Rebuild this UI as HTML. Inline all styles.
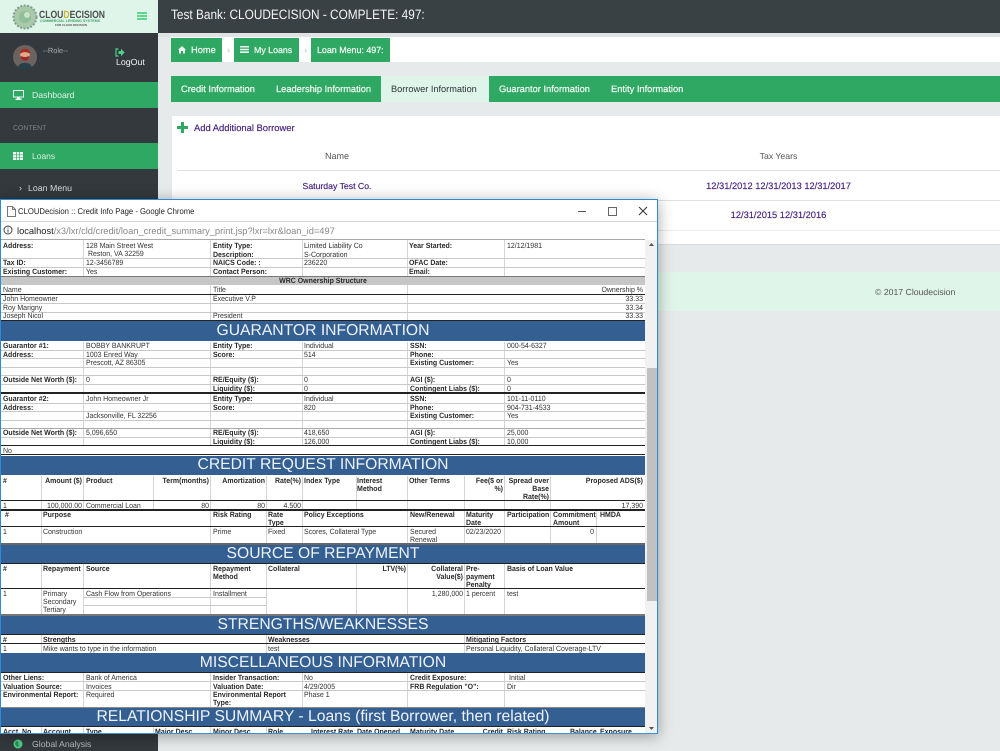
<!DOCTYPE html>
<html><head><meta charset="utf-8"><style>
html,body{margin:0;padding:0;width:1000px;height:751px;overflow:hidden;background:#e6eaea;font-family:"Liberation Sans",sans-serif;text-rendering:geometricPrecision}
div,span,a{position:absolute;white-space:nowrap}
.g{background:#2ea862}
.w{color:#eef7f1;font-size:9.3px;line-height:14px;-webkit-text-stroke:.25px #eef7f1}
.p{color:#43207f;font-size:9.3px;line-height:14px;-webkit-text-stroke:.15px #43207f}
#win{left:0;top:199px;width:658px;height:535px;background:#fff;box-shadow:0 2px 14px rgba(0,0,0,.35);border:1px solid #2b8bd6;border-bottom:1px solid #3a94d8;box-sizing:border-box;overflow:hidden}
#doc{left:-1px;top:-199px;width:1000px;height:751px}
#doc div{line-height:10px;height:10px;font-size:7.6px;color:#333}
#doc div.l{height:1px;background:#c9c9c9}
#doc div.k{height:1px;background:#222}
#doc div.v{width:1px;background:#d4d4d4}
#doc div.bl{background:#345f92;left:1px;width:644px}
#doc div.h{left:1px;width:644px;text-align:center;color:#eef3f8;font-size:15.7px;line-height:20px;height:20px}
#doc div.b{font-weight:bold;color:#2a2a2a}
#doc div.r{text-align:right}
#d>div:not(.l):not(.k):not(.v):not(.bl):not(.h){transform:scaleX(.92);transform-origin:0 50%}
#d>div.r:not(.l){transform-origin:100% 50%!important}
#d>div.c{transform-origin:50% 50%!important}
</style></head><body>
<!-- top -->
<div style="left:158px;top:0;width:842px;height:33px;background:#3a4144"></div>
<div style="left:158px;top:33px;width:842px;height:4px;background:#e0e3e3"></div>
<div style="left:171px;top:7px;color:#f4f4f4;font-size:13.6px;line-height:16px;transform-origin:0 50%;transform:scaleX(.87)">Test Bank: CLOUDECISION - COMPLETE: 497:</div>
<!-- sidebar -->
<div style="left:0;top:0;width:158px;height:751px;background:#33393d"></div>
<div style="left:0;top:0;width:158px;height:33px;background:#e0f5ea"></div>
<svg style="position:absolute;left:12px;top:4px" width="26" height="26"><circle cx="13" cy="13" r="11.5" fill="#a9c9a8"/><circle cx="13" cy="13" r="11.5" fill="none" stroke="#7f9f90" stroke-width="2" stroke-dasharray="2 1.5"/><circle cx="13" cy="13" r="6" fill="#8fc09a"/><circle cx="15" cy="11" r="3" fill="#c9e2c8"/></svg>
<div style="left:39px;top:9px;font-size:10.5px;font-weight:bold;color:#4a4f4f;line-height:12px;transform-origin:0 0;transform:scaleX(.82)">CLOU<span style="position:static;color:#c9b63a">D</span>ECISION</div>
<div style="left:40px;top:19px;font-size:3.6px;font-weight:bold;color:#3fa364;line-height:5px">COMMERCIAL LENDING SYSTEMS</div>
<div style="left:55px;top:23px;font-size:2.9px;font-weight:bold;color:#555;line-height:4px">FOR CLOUD DECISION</div>
<div style="left:137px;top:12px;width:10px;height:2px;background:#5ed68f"></div>
<div style="left:137px;top:15px;width:10px;height:2px;background:#5ed68f"></div>
<div style="left:137px;top:18px;width:10px;height:2px;background:#5ed68f"></div>
<svg style="position:absolute;left:13px;top:45px" width="24" height="24"><circle cx="12" cy="12" r="12" fill="#6b6360"/><path d="M5 23c1-4 3-5 7-5s6 1 7 5c-4 1.500-10 1.500-14 0z" fill="#26414a"/><circle cx="12" cy="10" r="5" fill="#e0a98a"/><path d="M7 9c-1-7 11-7 10 0-2-2.500-8-2.500-10 0z" fill="#a82c26"/><path d="M7.500 10.500c0 7 9 7 9 0-1.500 2-7.500 2-9 0z" fill="#9c2a24"/></svg>
<div style="left:43px;top:46px;color:#a9adb0;font-size:7.4px;line-height:10px">--Role--</div>
<svg style="position:absolute;left:115px;top:48px" width="10" height="9"><path d="M3.500 1H1v7h2.500" fill="none" stroke="#4fd08a" stroke-width="1.2"/><path d="M3.500 3H6V.8L9.600 4.500 6 8.200V6H3.500z" fill="#4fd08a"/></svg>
<div style="left:116px;top:56px;color:#f2f2f2;font-size:8.8px;line-height:12px">LogOut</div>
<div class="g" style="left:0;top:82px;width:158px;height:26px"></div>
<svg style="position:absolute;left:13px;top:90px" width="11" height="10"><path d="M0 0h11v7.500H7v1h1.500V10h-6V8.500H4v-1H0z" fill="#eef7f1"/><path d="M1 1h9v5.500H1z" fill="#2ea862"/></svg>
<div style="left:32px;top:88px;color:#e3f3e9;font-size:8.7px;line-height:14px">Dashboard</div>
<div style="left:13px;top:123px;color:#7f8487;font-size:6.9px;line-height:12px">CONTENT</div>
<div class="g" style="left:0;top:143px;width:158px;height:26px"></div>
<svg style="position:absolute;left:13px;top:152px" width="10" height="8"><path d="M0 0h10v8H0z" fill="#f2f7f3"/><path d="M3 0h.7v8H3zM6.300 0H7v8h-.7zM0 2.500h10v.6H0zM0 5.200h10v.6H0z" fill="#2ea862"/></svg>
<div style="left:32px;top:149px;color:#d9efe1;font-size:8.5px;line-height:14px">Loans</div>
<div style="left:19px;top:181px;color:#d8dadb;font-size:9px;line-height:14px">&#8250;</div>
<div style="left:28px;top:181px;color:#d8dadb;font-size:8.8px;line-height:14px">Loan Menu</div>
<!-- breadcrumb -->
<div style="left:171px;top:37px;width:829px;height:25px;background:#fff"></div>
<div class="g" style="left:171px;top:38px;width:51px;height:24px"></div>
<div class="g" style="left:234px;top:38px;width:65px;height:24px"></div>
<div class="g" style="left:311px;top:38px;width:79px;height:24px"></div>
<svg style="position:absolute;left:178px;top:46px" width="8" height="8"><path d="M4 0l4 3.800H7V7.500H5V5H3v2.500H1V3.800H0z" fill="#eef7f1"/></svg>
<div class="w" style="left:191px;top:43px;">Home</div>
<svg style="position:absolute;left:240px;top:46px" width="9" height="7"><path d="M0 0h9v1.500H0zM0 2.700h9v1.500H0zM0 5.400h9V7H0z" fill="#eef7f1"/></svg>
<div class="w" style="left:254px;top:43px;font-size:8.8px">My Loans</div>
<div class="w" style="left:317px;top:43px;font-size:8.9px">Loan Menu: 497:</div>
<div style="left:227px;top:44px;color:#8fcfa8;font-size:9px;line-height:12px">&#8250;</div>
<div style="left:304px;top:44px;color:#8fcfa8;font-size:9px;line-height:12px">&#8250;</div>
<!-- tabs -->
<div class="g" style="left:171px;top:76px;width:829px;height:26px"></div>
<div style="left:381px;top:76px;width:108px;height:26px;background:#e0f5ea"></div>
<div class="w" style="left:181px;top:82px">Credit Information</div>
<div class="w" style="left:276px;top:82px">Leadership Information</div>
<div style="left:391px;top:82px;color:#2b3236;font-size:9.2px;line-height:14px">Borrower Information</div>
<div class="w" style="left:499px;top:82px">Guarantor Information</div>
<div class="w" style="left:611px;top:82px">Entity Information</div>
<!-- card -->
<div style="left:172px;top:116px;width:828px;height:128px;background:#fff;border-bottom:1px solid #d8dcdc"></div>
<svg style="position:absolute;left:177px;top:122px" width="11" height="11"><path d="M4 0h3v4h4v3H7v4H4V7H0V4h4z" fill="#2ea862"/></svg>
<div class="p" style="left:194px;top:121px;font-size:9.4px">Add Additional Borrower</div>
<div style="left:237px;top:149px;width:200px;text-align:center;color:#555;font-size:9px;line-height:14px">Name</div>
<div style="left:678.500px;top:149px;width:200px;text-align:center;color:#555;font-size:8.7px;line-height:14px">Tax Years</div>
<div style="left:177px;top:170px;width:823px;height:1px;background:#dfe2e2"></div>
<div style="left:177px;top:200px;width:823px;height:1px;background:#dfe2e2"></div>
<div style="left:177px;top:230px;width:823px;height:1px;background:#eceeee"></div>
<div class="p" style="left:237px;top:179px;width:200px;text-align:center;font-size:8.7px">Saturday Test Co.</div>
<div class="p" style="left:628.500px;top:179px;width:300px;text-align:center;font-size:9.3px">12/31/2012 12/31/2013 12/31/2017</div>
<div class="p" style="left:628.500px;top:208px;width:300px;text-align:center;font-size:9.3px">12/31/2015 12/31/2016</div>
<!-- footer -->
<div style="left:158px;top:272px;width:842px;height:39px;background:#e0f5ea"></div>
<div style="left:875px;top:285px;color:#555;font-size:8.7px;line-height:14px">© 2017 Cloudecision</div>
<div style="left:0;top:734px;width:158px;height:17px;background:#33393d"></div>
<svg style="position:absolute;left:13px;top:739px" width="10" height="10"><circle cx="5" cy="5" r="4.500" fill="#4fd08a"/><path d="M3 2l3 1-1 2 2 2-3 1-2-3z" fill="#2c8f5f"/></svg>
<div style="left:32px;top:737px;color:#b9bdbf;font-size:8.7px;line-height:14px">Global Analysis</div>
<!-- window -->
<div id="win"><div id="doc">
<div style="left:1px;top:200px;width:657px;height:21px;background:#fff"></div>
<svg style="position:absolute;left:7px;top:205px" width="9" height="11"><path d="M.5.500h5l3 3v7H.500z M5.500.500v3h3" fill="#fff" stroke="#777"/></svg>
<div style="left:18px;top:205px;font-size:8.4px;color:#222;transform-origin:0 50%;transform:scaleX(.92)">CLOUDecision :: Credit Info Page - Google Chrome</div>
<div class="k" style="left:578px;top:210px;width:8px;background:#555"></div>
<div style="left:608px;top:206px;width:7px;height:7px;border:1px solid #666"></div>
<svg style="position:absolute;left:638px;top:205px" width="10" height="10"><path d="M1 1l8 8M9 1l-8 8" stroke="#333" stroke-width="1"/></svg>
<div class="l" style="left:1px;top:220px;width:657px;background:#d6d6d6"></div>
<svg style="position:absolute;left:3px;top:224px" width="10" height="10"><circle cx="5" cy="5" r="4" fill="none" stroke="#444"/><path d="M5 2.500v1M5 4.500V7.500" stroke="#444"/></svg>
<div style="left:17px;top:225px;font-size:9.3px;color:#888"><span style="position:static;color:#222">localhost</span>/x3/lxr/cld/credit/loan_credit_summary_print.jsp?lxr=lxr&amp;loan_id=497</div>
<div style="left:1px;top:238px;width:644px;height:496px;background:#fff;border-top:1px solid #a8a8a8"></div>
<div style="left:645px;top:239px;width:13px;height:495px;background:#f1f1f1"></div>
<div style="left:647px;top:367px;width:10px;height:233px;background:#c1c1c1"></div>
<svg style="position:absolute;left:648px;top:241px" width="7" height="6"><path d="M3.500 1L6 4H1z" fill="#555"/></svg>
<svg style="position:absolute;left:648px;top:724px" width="7" height="6"><path d="M3.500 5L1 2h5z" fill="#555"/></svg>
<div id="d" style="left:0;top:0;width:1000px;height:751px">
<!-- vertical lines -->
<div class="v" style="left:83px;top:239px;height:36px"></div><div class="v" style="left:210px;top:239px;height:36px"></div><div class="v" style="left:302px;top:239px;height:36px"></div><div class="v" style="left:407px;top:239px;height:36px"></div><div class="v" style="left:504px;top:239px;height:36px"></div>
<div class="v" style="left:210px;top:284px;height:35px"></div><div class="v" style="left:407px;top:284px;height:35px"></div>
<div class="v" style="left:83px;top:341px;height:103px"></div><div class="v" style="left:210px;top:341px;height:103px"></div><div class="v" style="left:302px;top:341px;height:103px"></div><div class="v" style="left:407px;top:341px;height:103px"></div><div class="v" style="left:504px;top:341px;height:103px"></div>
<div class="v" style="left:41px;top:475px;height:33px"></div><div class="v" style="left:83px;top:475px;height:33px"></div><div class="v" style="left:153px;top:475px;height:33px"></div><div class="v" style="left:210px;top:475px;height:33px"></div><div class="v" style="left:266px;top:475px;height:33px"></div><div class="v" style="left:302px;top:475px;height:33px"></div><div class="v" style="left:356px;top:475px;height:33px"></div><div class="v" style="left:407px;top:475px;height:33px"></div><div class="v" style="left:464px;top:475px;height:33px"></div><div class="v" style="left:504px;top:475px;height:33px"></div><div class="v" style="left:550px;top:475px;height:33px"></div>
<div class="v" style="left:41px;top:509px;height:34px"></div><div class="v" style="left:210px;top:509px;height:34px"></div><div class="v" style="left:266px;top:509px;height:34px"></div><div class="v" style="left:302px;top:509px;height:34px"></div><div class="v" style="left:407px;top:509px;height:34px"></div><div class="v" style="left:464px;top:509px;height:34px"></div><div class="v" style="left:504px;top:509px;height:34px"></div><div class="v" style="left:550px;top:509px;height:34px"></div><div class="v" style="left:596px;top:509px;height:34px"></div>
<div class="v" style="left:41px;top:563px;height:51px"></div><div class="v" style="left:83px;top:563px;height:51px"></div><div class="v" style="left:210px;top:563px;height:51px"></div><div class="v" style="left:266px;top:563px;height:51px"></div><div class="v" style="left:356px;top:563px;height:51px"></div><div class="v" style="left:407px;top:563px;height:51px"></div><div class="v" style="left:464px;top:563px;height:51px"></div><div class="v" style="left:504px;top:563px;height:51px"></div>
<div class="v" style="left:41px;top:634px;height:18px"></div><div class="v" style="left:266px;top:634px;height:18px"></div><div class="v" style="left:464px;top:634px;height:18px"></div>
<div class="v" style="left:83px;top:672px;height:35px"></div><div class="v" style="left:210px;top:672px;height:35px"></div><div class="v" style="left:302px;top:672px;height:35px"></div><div class="v" style="left:407px;top:672px;height:35px"></div><div class="v" style="left:504px;top:672px;height:35px"></div>
<div class="v" style="left:41px;top:726px;height:8px"></div><div class="v" style="left:83px;top:726px;height:8px"></div><div class="v" style="left:153px;top:726px;height:8px"></div><div class="v" style="left:210px;top:726px;height:8px"></div><div class="v" style="left:266px;top:726px;height:8px"></div>

<!-- section 1 -->
<div class="l" style="left:1px;top:257px;width:644px"></div><div class="l" style="left:1px;top:266px;width:644px"></div>
<div class="l" style="left:1px;top:275px;width:644px;height:9px;background:#c6c6c6;border-top:1px solid #777;box-sizing:border-box"></div>
<div class="k" style="left:1px;top:293px;width:644px;"></div><div class="l" style="left:1px;top:302px;width:644px"></div><div class="l" style="left:1px;top:311px;width:644px"></div><div class="k" style="left:1px;top:319px;width:644px"></div>
<div class="b" style="left:3px;top:240px">Address:</div><div style="left:86px;top:240px">128 Main Street West</div><div class="b" style="left:213px;top:240px">Entity Type:</div><div style="left:304px;top:240px">Limited Liability Co</div><div class="b" style="left:409px;top:240px">Year Started:</div><div style="left:507px;top:240px">12/12/1981</div>
<div style="left:88px;top:248px">Reston, VA 32259</div><div class="b" style="left:213px;top:249px">Description:</div><div style="left:304px;top:249px">S-Corporation</div>
<div class="b" style="left:3px;top:257px">Tax ID:</div><div style="left:86px;top:257px">12-3456789</div><div class="b" style="left:213px;top:257px">NAICS Code: :</div><div style="left:304px;top:257px">236220</div><div class="b" style="left:409px;top:257px">OFAC Date:</div>
<div class="b" style="left:3px;top:266px">Existing Customer:</div><div style="left:86px;top:266px">Yes</div><div class="b" style="left:213px;top:266px">Contact Person:</div><div class="b" style="left:409px;top:266px">Email:</div>
<div class="b c" style="left:1px;top:275px;width:644px;text-align:center">WRC Ownership Structure</div>
<div style="left:3px;top:284px">Name</div><div style="left:213px;top:284px">Title</div><div class="r" style="left:445px;width:198px;top:284px">Ownership %</div>
<div style="left:3px;top:293px">John Homeowner</div><div style="left:213px;top:293px">Executive V.P</div><div class="r" style="left:445px;width:198px;top:293px">33.33</div>
<div style="left:3px;top:302px">Roy Marigny</div><div class="r" style="left:445px;width:198px;top:302px">33.34</div>
<div style="left:3px;top:310px">Joseph Nicol</div><div style="left:213px;top:310px">President</div><div class="r" style="left:445px;width:198px;top:310px">33.33</div>

<div class="bl" style="top:320px;height:20px"></div><div class="h" style="top:320px">GUARANTOR INFORMATION</div>
<div class="l" style="left:1px;top:349px;width:644px"></div><div class="l" style="left:1px;top:357px;width:644px"></div><div class="l" style="left:1px;top:366px;width:644px"></div><div class="l" style="left:1px;top:374px;width:644px"></div><div class="l" style="left:1px;top:383px;width:644px"></div>
<div class="k" style="left:1px;top:391px;width:644px;height:2px"></div>
<div class="l" style="left:1px;top:402px;width:644px"></div><div class="l" style="left:1px;top:410px;width:644px"></div><div class="l" style="left:1px;top:419px;width:644px"></div><div class="l" style="left:1px;top:427px;width:644px;background:#aaa"></div><div class="l" style="left:1px;top:436px;width:644px"></div>
<div class="k" style="left:1px;top:444px;width:644px"></div><div class="k" style="left:1px;top:453px;width:644px"></div>
<div class="b" style="left:3px;top:340px">Guarantor #1:</div><div style="left:86px;top:340px">BOBBY BANKRUPT</div><div class="b" style="left:213px;top:340px">Entity Type:</div><div style="left:304px;top:340px">Individual</div><div class="b" style="left:410px;top:340px">SSN:</div><div style="left:507px;top:340px">000-54-6327</div>
<div class="b" style="left:3px;top:349px">Address:</div><div style="left:86px;top:349px">1003 Enred Way</div><div class="b" style="left:213px;top:349px">Score:</div><div style="left:304px;top:349px">514</div><div class="b" style="left:410px;top:349px">Phone:</div>
<div style="left:86px;top:357px">Prescott, AZ 86305</div><div class="b" style="left:410px;top:357px">Existing Customer:</div><div style="left:507px;top:357px">Yes</div>
<div class="b" style="left:3px;top:374px">Outside Net Worth ($):</div><div style="left:86px;top:374px">0</div><div class="b" style="left:213px;top:374px">RE/Equity ($):</div><div style="left:304px;top:374px">0</div><div class="b" style="left:410px;top:374px">AGI ($):</div><div style="left:507px;top:374px">0</div>
<div class="b" style="left:213px;top:383px">Liquidity ($):</div><div style="left:304px;top:383px">0</div><div class="b" style="left:410px;top:383px">Contingent Liabs ($):</div><div style="left:507px;top:383px">0</div>
<div class="b" style="left:3px;top:393px">Guarantor #2:</div><div style="left:86px;top:393px">John Homeowner Jr</div><div class="b" style="left:213px;top:393px">Entity Type:</div><div style="left:304px;top:393px">Individual</div><div class="b" style="left:410px;top:393px">SSN:</div><div style="left:507px;top:393px">101-11-0110</div>
<div class="b" style="left:3px;top:402px">Address:</div><div class="b" style="left:213px;top:402px">Score:</div><div style="left:304px;top:402px">820</div><div class="b" style="left:410px;top:402px">Phone:</div><div style="left:507px;top:402px">904-731-4533</div>
<div style="left:86px;top:410px">Jacksonville, FL 32256</div><div class="b" style="left:410px;top:410px">Existing Customer:</div><div style="left:507px;top:410px">Yes</div>
<div class="b" style="left:3px;top:427px">Outside Net Worth ($):</div><div style="left:86px;top:427px">5,096,650</div><div class="b" style="left:213px;top:427px">RE/Equity ($):</div><div style="left:304px;top:427px">418,650</div><div class="b" style="left:410px;top:427px">AGI ($):</div><div style="left:507px;top:427px">25,000</div>
<div class="b" style="left:213px;top:436px">Liquidity ($):</div><div style="left:304px;top:436px">126,000</div><div class="b" style="left:410px;top:436px">Contingent Liabs ($):</div><div style="left:507px;top:436px">10,000</div>
<div style="left:3px;top:445px">No</div>

<div class="bl" style="top:455px;height:19px"></div><div class="h" style="top:454px">CREDIT REQUEST INFORMATION</div>
<div class="k" style="left:1px;top:499px;width:644px"></div><div class="k" style="left:1px;top:508px;width:644px;height:2px"></div><div class="k" style="left:1px;top:525px;width:644px"></div><div class="l" style="left:1px;top:542px;width:644px;height:2px;background:#666"></div>
<div class="b" style="left:3px;top:475px">#</div><div class="b r" style="left:41px;width:41px;top:475px">Amount ($)</div><div class="b" style="left:86px;top:475px">Product</div><div class="b r" style="left:153px;width:56px;top:475px">Term(months)</div><div class="b r" style="left:211px;width:54px;top:475px">Amortization</div><div class="b r" style="left:266px;width:35px;top:475px">Rate(%)</div><div class="b" style="left:304px;top:475px">Index Type</div><div class="b" style="left:357px;top:475px">Interest</div><div class="b" style="left:357px;top:483px">Method</div><div class="b" style="left:409px;top:475px">Other Terms</div><div class="b r" style="left:465px;width:38px;top:475px">Fee($ or</div><div class="b r" style="left:465px;width:38px;top:483px">%)</div><div class="b r" style="left:505px;width:44px;top:475px">Spread over</div><div class="b r" style="left:505px;width:44px;top:483px">Base</div><div class="b r" style="left:505px;width:44px;top:491px">Rate(%)</div><div class="b r" style="left:551px;width:92px;top:475px">Proposed ADS($)</div>
<div style="left:3px;top:500px">1</div><div class="r" style="left:41px;width:41px;top:500px">100,000.00</div><div style="left:86px;top:500px">Commercial Loan</div><div class="r" style="left:153px;width:56px;top:500px">80</div><div class="r" style="left:211px;width:54px;top:500px">80</div><div class="r" style="left:266px;width:35px;top:500px">4.500</div><div class="r" style="left:551px;width:92px;top:500px">17,390</div>
<div class="b" style="left:5px;top:509px">#</div><div class="b" style="left:43px;top:509px">Purpose</div><div class="b" style="left:213px;top:509px">Risk Rating</div><div class="b" style="left:268px;top:509px">Rate</div><div class="b" style="left:268px;top:517px">Type</div><div class="b" style="left:304px;top:509px">Policy Exceptions</div><div class="b" style="left:410px;top:509px">New/Renewal</div><div class="b" style="left:466px;top:509px">Maturity</div><div class="b" style="left:466px;top:517px">Date</div><div class="b" style="left:507px;top:509px">Participation</div><div class="b" style="left:553px;top:509px">Commitment</div><div class="b" style="left:553px;top:517px">Amount</div><div class="b" style="left:600px;top:509px">HMDA</div>
<div style="left:3px;top:526px">1</div><div style="left:43px;top:526px">Construction</div><div style="left:213px;top:526px">Prime</div><div style="left:268px;top:526px">Fixed</div><div style="left:304px;top:526px">Scores, Collateral Type</div><div style="left:410px;top:526px">Secured</div><div style="left:410px;top:534px">Renewal</div><div style="left:466px;top:526px">02/23/2020</div><div class="r" style="left:553px;width:41px;top:526px">0</div>

<div class="bl" style="top:544px;height:18px"></div><div class="h" style="top:543px">SOURCE OF REPAYMENT</div>
<div class="k" style="left:1px;top:562px;width:644px"></div><div class="k" style="left:1px;top:587px;width:644px"></div><div class="l" style="left:84px;top:596px;width:182px"></div><div class="l" style="left:84px;top:604px;width:182px"></div><div class="l" style="left:1px;top:613px;width:644px;height:2px;background:#777"></div>
<div class="b" style="left:3px;top:563px">#</div><div class="b" style="left:43px;top:563px">Repayment</div><div class="b" style="left:86px;top:563px">Source</div><div class="b" style="left:213px;top:563px">Repayment</div><div class="b" style="left:213px;top:571px">Method</div><div class="b" style="left:268px;top:563px">Collateral</div><div class="b r" style="left:357px;width:49px;top:563px">LTV(%)</div><div class="b r" style="left:408px;width:55px;top:563px">Collateral</div><div class="b r" style="left:408px;width:55px;top:571px">Value($)</div><div class="b" style="left:466px;top:563px">Pre-</div><div class="b" style="left:466px;top:571px">payment</div><div class="b" style="left:466px;top:579px">Penalty</div><div class="b" style="left:507px;top:563px">Basis of Loan Value</div>
<div style="left:3px;top:588px">1</div><div style="left:43px;top:588px">Primary</div><div style="left:86px;top:588px">Cash Flow from Operations</div><div style="left:213px;top:588px">Installment</div><div class="r" style="left:408px;width:55px;top:588px">1,280,000</div><div style="left:466px;top:588px">1 percent</div><div style="left:507px;top:588px">test</div>
<div style="left:43px;top:596px">Secondary</div><div style="left:43px;top:604px">Tertiary</div>

<div class="bl" style="top:615px;height:18px"></div><div class="h" style="top:614px">STRENGTHS/WEAKNESSES</div>
<div class="k" style="left:1px;top:633px;width:644px"></div><div class="k" style="left:1px;top:642px;width:644px"></div>
<div class="b" style="left:3px;top:634px">#</div><div class="b" style="left:43px;top:634px">Strengths</div><div class="b" style="left:268px;top:634px">Weaknesses</div><div class="b" style="left:466px;top:634px">Mitigating Factors</div>
<div style="left:3px;top:643px">1</div><div style="left:43px;top:643px">Mike wants to type in the information</div><div style="left:268px;top:643px">test</div><div style="left:466px;top:643px">Personal Liquidity, Collateral Coverage-LTV</div>

<div class="bl" style="top:652px;height:19px"></div><div class="h" style="top:652px">MISCELLANEOUS INFORMATION</div>
<div class="k" style="left:1px;top:671px;width:644px"></div><div class="l" style="left:1px;top:680px;width:644px"></div><div class="l" style="left:1px;top:689px;width:644px"></div><div class="l" style="left:1px;top:706px;width:644px;height:2px;background:#888"></div>
<div class="b" style="left:3px;top:672px">Other Liens:</div><div style="left:86px;top:672px">Bank of America</div><div class="b" style="left:213px;top:672px">Insider Transaction:</div><div style="left:304px;top:672px">No</div><div class="b" style="left:410px;top:672px">Credit Exposure:</div><div style="left:509px;top:672px">Initial</div>
<div class="b" style="left:3px;top:681px">Valuation Source:</div><div style="left:86px;top:681px">Invoices</div><div class="b" style="left:213px;top:681px">Valuation Date:</div><div style="left:304px;top:681px">4/29/2005</div><div class="b" style="left:410px;top:681px">FRB Regulation "O":</div><div style="left:507px;top:681px">Dir</div>
<div class="b" style="left:3px;top:689px">Environmental Report:</div><div style="left:86px;top:689px">Required</div><div class="b" style="left:213px;top:689px">Environmental Report</div><div style="left:304px;top:689px">Phase 1</div><div class="b" style="left:213px;top:697px">Type:</div>

<div class="bl" style="top:707px;height:18px"></div><div class="h" style="top:706px">RELATIONSHIP SUMMARY - Loans (first Borrower, then related)</div>
<div class="k" style="left:1px;top:725px;width:644px"></div>
<div class="b" style="left:3px;top:726px">Acct. No.</div><div class="b" style="left:43px;top:726px">Account</div><div class="b" style="left:86px;top:726px">Type</div><div class="b" style="left:155px;top:726px">Major Desc</div><div class="b" style="left:213px;top:726px">Minor Desc</div><div class="b" style="left:268px;top:726px">Role</div><div class="b" style="left:311px;top:726px">Interest Rate</div><div class="b" style="left:357px;top:726px">Date Opened</div><div class="b" style="left:410px;top:726px">Maturity Date</div><div class="b r" style="left:465px;width:38px;top:726px">Credit</div><div class="b" style="left:507px;top:726px">Risk Rating</div><div class="b" style="left:570px;top:726px">Balance</div><div class="b" style="left:600px;top:726px">Exposure</div>
</div>
</div></div>
</body></html>
